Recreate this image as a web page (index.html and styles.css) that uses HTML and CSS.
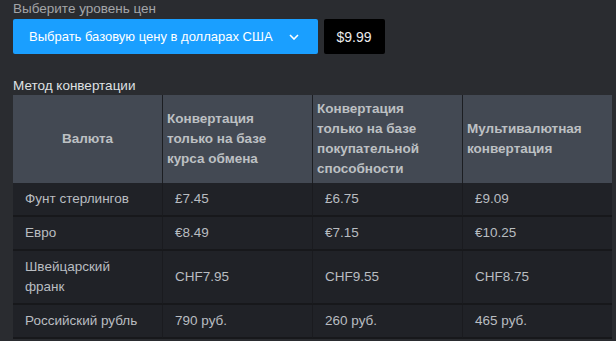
FILE: index.html
```html
<!DOCTYPE html>
<html lang="ru">
<head>
<meta charset="utf-8">
<title>Уровень цен</title>
<link rel="stylesheet" href="styles.css">
</head>
<body>
  <div class="price-level">
    <div class="field-label">Выберите уровень цен</div>
    <div class="picker-row">
      <button class="picker" type="button">
        <span>Выбрать базовую цену в долларах США</span>
        <svg class="chevron" width="10" height="6" viewBox="0 0 10 6" aria-hidden="true">
          <path d="M1 1 L5 5 L9 1" fill="none" stroke="#fff" stroke-width="1.6"/>
        </svg>
      </button>
      <div class="price-tag">$9.99</div>
    </div>
  </div>

  <div class="section-title">Метод конвертации</div>
  <div class="table-wrap">
    <table class="conversion">
      <colgroup>
        <col class="c1"><col class="c2"><col class="c3"><col class="c4">
      </colgroup>
      <thead>
        <tr>
          <th class="center">Валюта</th>
          <th>Конвертация только на базе курса обмена</th>
          <th>Конвертация только на базе покупательной способности</th>
          <th>Мультивалютная конвертация</th>
        </tr>
      </thead>
      <tbody>
        <tr><td>Фунт стерлингов</td><td>£7.45</td><td>£6.75</td><td>£9.09</td></tr>
        <tr><td>Евро</td><td>€8.49</td><td>€7.15</td><td>€10.25</td></tr>
        <tr><td>Швейцарский франк</td><td>CHF7.95</td><td>CHF9.55</td><td>CHF8.75</td></tr>
        <tr><td>Российский рубль</td><td>790 руб.</td><td>260 руб.</td><td>465 руб.</td></tr>
      </tbody>
    </table>
  </div>
</body>
</html>
```

FILE: styles.css
```css
html, body {
  margin: 0;
  background: #2a2c30;
}

body {
  padding: 0 13px;
  font-family: "Liberation Sans", Arial, sans-serif;
  font-size: 13px;
  color: #b9bdc1;
}

.field-label {
  line-height: 18px;
  font-size: 13.5px;
  color: #a3a5a8;
  margin-bottom: 1px;
}

.picker-row {
  display: flex;
  gap: 6px;
  height: 35px;
}

.picker {
  display: flex;
  align-items: center;
  gap: 16px;
  height: 35px;
  padding: 0 19px 0 16px;
  border: 0;
  border-radius: 2px;
  background: #1a9fff;
  color: #fff;
  font-family: inherit;
  font-size: 13px;
  cursor: pointer;
}

.chevron {
  display: block;
  margin-top: 1px;
}

.price-tag {
  display: flex;
  align-items: center;
  padding: 0 13px;
  border-radius: 2px;
  background: #000;
  color: #ececec;
  font-size: 14px;
}

.section-title {
  margin-top: 23px;
  line-height: 18px;
  font-size: 13.5px;
  color: #dfe1e3;
}

.table-wrap {
  width: 599px;
  overflow: hidden;
}

.conversion {
  width: 599px;
  table-layout: fixed;
  border-collapse: separate;
  border-spacing: 0;
  font-size: 13.5px;
}

.c1, .c2, .c3 { width: 150px; }
.c4 { width: 149px; }

.conversion th {
  background: #434953;
  color: #bdc0c3;
  font-weight: bold;
  text-align: left;
  line-height: 20px;
  padding: 4px 10px 4px 4px;
  border-right: 1px solid #1c1e22;
  vertical-align: middle;
}

.conversion th.center {
  text-align: center;
  padding-right: 4px;
}

.conversion td {
  background: #202227;
  line-height: 20px;
  padding: 6px 12px;
  border-right: 1px solid #1a1b1f;
  border-bottom: 2px solid #17181b;
  vertical-align: middle;
}

.conversion th:last-child,
.conversion td:last-child {
  border-right: 0;
}
```
